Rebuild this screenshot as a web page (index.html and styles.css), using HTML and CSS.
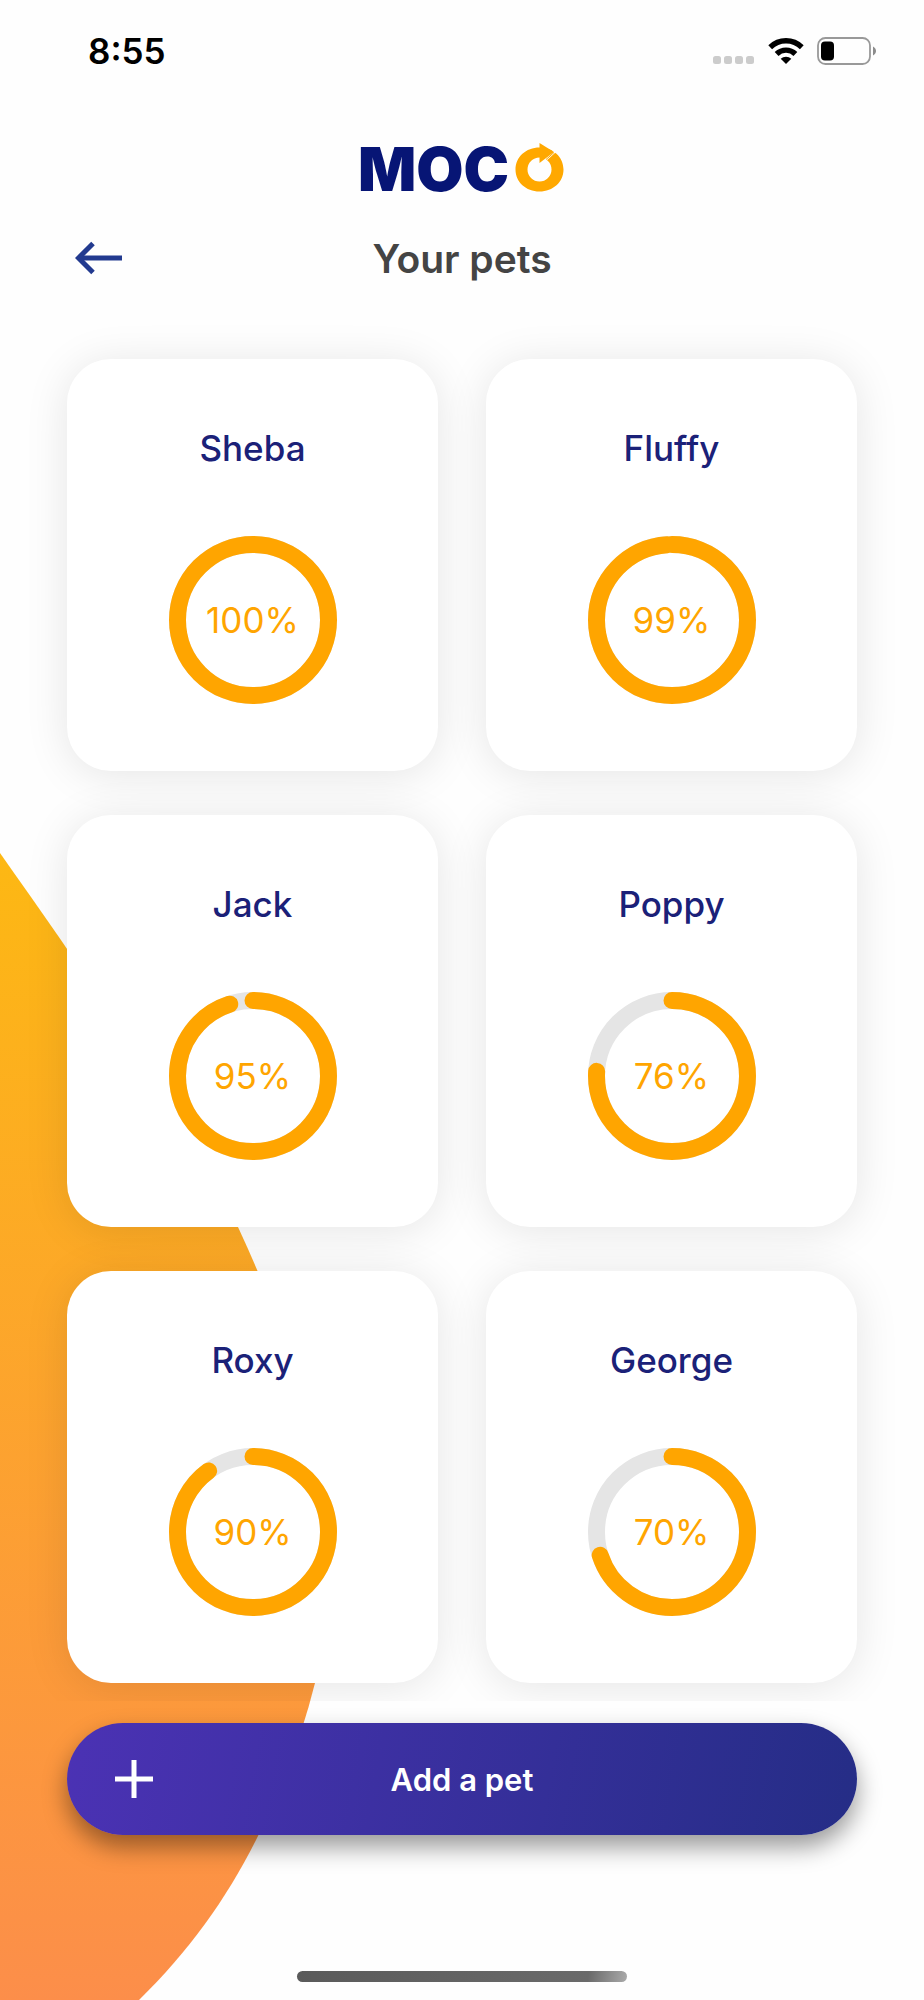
FILE: index.html
```html
<!DOCTYPE html>
<html lang="en">
<head>
    <meta charset="UTF-8">
    <meta name="viewport" content="width=device-width, initial-scale=1.0">
    <title>MOCO - Your pets</title>
    <link rel="stylesheet" href="styles.css">
</head>
<body>
    <svg class="backdrop" viewBox="0 0 340 1160" aria-hidden="true">
        <defs>
            <linearGradient id="backdrop-fill" x1="0" y1="0" x2="0" y2="1">
                <stop offset="0" stop-color="#fdb813"/>
                <stop offset="1" stop-color="#fc8e4a"/>
            </linearGradient>
        </defs>
        <path fill="url(#backdrop-fill)" d="M0 13 C100 155 190 285 238 387 C300 520 350 680 315 843 C302 895 283 945 259 994 C228 1057 190 1110 139 1160 H0 Z"/>
    </svg>

    <div class="status-bar">
        <span class="clock">8:55</span>
        <div class="status-icons">
            <svg width="42" height="26" viewBox="0 0 42 26" fill="#cccccc" aria-hidden="true">
                <rect x="0" y="18" width="8" height="8" rx="2.5"/>
                <rect x="11" y="18" width="8" height="8" rx="2.5"/>
                <rect x="22" y="18" width="8" height="8" rx="2.5"/>
                <rect x="33" y="18" width="8" height="8" rx="2.5"/>
            </svg>
            <svg width="36" height="26" viewBox="0 0 36 26" aria-hidden="true">
                <g fill="none" stroke="#000" stroke-width="5.4">
                    <path d="M2.2 9.2 A22.6 22.6 0 0 1 33.8 9.2"/>
                    <path d="M8.6 16 A13.4 13.4 0 0 1 27.4 16"/>
                </g>
                <path d="M18 26 L12.7 20.8 A7.6 7.6 0 0 1 23.3 20.8 Z"/>
            </svg>
            <svg width="60" height="28" viewBox="0 0 60 28" aria-hidden="true">
                <rect x="1" y="1" width="52" height="26" rx="7.5" fill="none" stroke="#999" stroke-width="1.8"/>
                <rect x="4" y="4.5" width="13" height="19" rx="4"/>
                <path d="M56 9.5 C60 11.5 60 16.5 56 18.5 Z" fill="#8c8c8c"/>
            </svg>
        </div>
    </div>

    <header>
        <svg class="logo" width="203" height="52" viewBox="0 0 203 52" role="img" aria-label="MOCO">
            <text class="logo-text" x="-3" y="49">MOC</text>
            <path fill="#ffa800" fill-rule="evenodd" d="M178.500 5.500 C192 5.500 202.500 15 202.500 27.500 C202.500 40 192 49.500 178.500 49.500 C165 49.500 154.500 40 154.500 27.500 C154.500 15 165 5.500 178.500 5.500 Z M178.500 15.500 A12 12 0 1 0 178.500 39.500 A12 12 0 1 0 178.500 15.500 Z"/>
            <path d="M183 19 L194 9" stroke="#fefefe" stroke-width="3" fill="none"/>
            <path d="M178.500 1 L193 10 L178.500 21 Z" fill="#ffa800"/>
            <path d="M185 17.500 L193 10.500" stroke="#ffa800" stroke-width="1"/>
        </svg>
        <div class="title-row">
            <a class="back-link" href="#" aria-label="Back">
                <svg width="48" height="34" viewBox="0 0 48 34" fill="none" stroke="#223a8f" stroke-width="5">
                    <path d="M47 17 H4"/>
                    <path d="M18 2.500 L3.500 17 L18 31.500"/>
                </svg>
            </a>
            <h1>Your pets</h1>
        </div>
    </header>

    <main>
        <ul class="pet-grid">
            <li class="pet-card">
                <h2>Sheba</h2>
                <div class="ring">
                    <svg viewBox="0 0 168 168" aria-hidden="true">
                        <circle class="ring-track" cx="84" cy="84" r="75.5"/>
                        <circle class="ring-value" cx="84" cy="84" r="75.5" pathLength="100" style="stroke-dasharray: 100 100"/>
                    </svg>
                    <span class="ring-label">100%</span>
                </div>
            </li>
            <li class="pet-card">
                <h2>Fluffy</h2>
                <div class="ring">
                    <svg viewBox="0 0 168 168" aria-hidden="true">
                        <circle class="ring-track" cx="84" cy="84" r="75.5"/>
                        <circle class="ring-value" cx="84" cy="84" r="75.5" pathLength="100" style="stroke-dasharray: 99 100"/>
                    </svg>
                    <span class="ring-label">99%</span>
                </div>
            </li>
            <li class="pet-card">
                <h2>Jack</h2>
                <div class="ring">
                    <svg viewBox="0 0 168 168" aria-hidden="true">
                        <circle class="ring-track" cx="84" cy="84" r="75.5"/>
                        <circle class="ring-value" cx="84" cy="84" r="75.5" pathLength="100" style="stroke-dasharray: 95 100"/>
                    </svg>
                    <span class="ring-label">95%</span>
                </div>
            </li>
            <li class="pet-card">
                <h2>Poppy</h2>
                <div class="ring">
                    <svg viewBox="0 0 168 168" aria-hidden="true">
                        <circle class="ring-track" cx="84" cy="84" r="75.5"/>
                        <circle class="ring-value" cx="84" cy="84" r="75.5" pathLength="100" style="stroke-dasharray: 76 100"/>
                    </svg>
                    <span class="ring-label">76%</span>
                </div>
            </li>
            <li class="pet-card">
                <h2>Roxy</h2>
                <div class="ring">
                    <svg viewBox="0 0 168 168" aria-hidden="true">
                        <circle class="ring-track" cx="84" cy="84" r="75.5"/>
                        <circle class="ring-value" cx="84" cy="84" r="75.5" pathLength="100" style="stroke-dasharray: 90 100"/>
                    </svg>
                    <span class="ring-label">90%</span>
                </div>
            </li>
            <li class="pet-card">
                <h2>George</h2>
                <div class="ring">
                    <svg viewBox="0 0 168 168" aria-hidden="true">
                        <circle class="ring-track" cx="84" cy="84" r="75.5"/>
                        <circle class="ring-value" cx="84" cy="84" r="75.5" pathLength="100" style="stroke-dasharray: 70 100"/>
                    </svg>
                    <span class="ring-label">70%</span>
                </div>
            </li>
        </ul>
    </main>

    <footer>
        <button type="button" class="add-btn">
            <svg width="38" height="38" viewBox="0 0 38 38" stroke="#fff" stroke-width="5" aria-hidden="true">
                <path d="M19 0 V38 M0 19 H38"/>
            </svg>
            <span>Add a pet</span>
        </button>
        <div class="home-indicator"></div>
    </footer>
</body>
</html>
```
FILE: styles.css
```css
:root {
    --navy: #1b2178;
    --logo-navy: #071575;
    --orange: #ffa500;
    --track: #e5e5e5;
    --title: #444444;
    --page-bg: #fefefe;
    --white: #ffffff;
    --gutter: 67px;
}

* {
    box-sizing: border-box;
}

body {
    position: relative;
    display: flex;
    flex-direction: column;
    min-height: 100vh;
    margin: 0;
    background-color: var(--page-bg);
    font-family: Inter, 'Helvetica Neue', Arial, sans-serif;
}

svg {
    display: block;
}

/* Orange shape behind the cards */
.backdrop {
    position: absolute;
    left: 0;
    bottom: 0;
    width: 340px;
    z-index: -1;
}

.status-bar {
    display: flex;
    justify-content: space-between;
    align-items: center;
    height: 102px;
    padding: 0 47px 0 88px;
}

.clock {
    font-size: 35px;
    font-weight: 600;
}

.status-icons {
    display: flex;
    align-items: center;
    gap: 13px;
}

header {
    padding: 40px var(--gutter) 29px;
}

.logo {
    margin: 0 auto;
    overflow: visible;
}

.logo-text {
    fill: var(--logo-navy);
    font-size: 61px;
    font-weight: 900;
}

.title-row {
    display: grid;
    grid-template-columns: 64px 1fr 64px;
    align-items: center;
    height: 64px;
    margin-top: 32px;
}

.back-link {
    padding-left: 8px;
}

h1 {
    margin: 0;
    color: var(--title);
    font-size: 39px;
    font-weight: 600;
    text-align: center;
}

main {
    overflow: hidden;
    padding: 40px var(--gutter) 18px;
}

.pet-grid {
    display: grid;
    grid-template-columns: 1fr 1fr;
    gap: 44px 48px;
    margin: 0;
    padding: 0;
    list-style: none;
}

.pet-card {
    display: flex;
    flex-direction: column;
    align-items: center;
    gap: 65px;
    padding: 67px 24px;
    border-radius: 44px;
    background-color: var(--white);
    box-shadow: 0 4px 44px rgba(0, 0, 0, 0.1);
}

h2 {
    margin: 0;
    color: var(--navy);
    font-size: 35px;
    font-weight: 500;
    line-height: 45px;
}

.ring {
    display: grid;
    place-items: center;
    width: 168px;
    height: 168px;
}

.ring svg,
.ring-label {
    grid-area: 1 / 1;
}

.ring svg {
    width: 100%;
    transform: rotate(-90deg);
}

.ring circle {
    fill: none;
    stroke-width: 17px;
}

.ring-track {
    stroke: var(--track);
}

.ring-value {
    stroke: var(--orange);
    stroke-linecap: round;
}

.ring-label {
    color: var(--orange);
    font-size: 35px;
    font-weight: 400;
}

footer {
    display: flex;
    flex: 1;
    flex-direction: column;
    justify-content: space-between;
    align-items: center;
    padding: 22px var(--gutter) 18px;
}

.add-btn {
    display: grid;
    grid-template-columns: 38px 1fr 38px;
    align-items: center;
    width: 100%;
    height: 112px;
    padding: 0 48px;
    border: none;
    border-radius: 56px;
    background: linear-gradient(100deg, #4b32b4, #252d86);
    box-shadow: 0 12px 24px rgba(0, 0, 0, 0.4);
    color: var(--white);
    font-family: inherit;
    font-size: 31px;
    font-weight: 600;
    cursor: pointer;
}

.home-indicator {
    width: 330px;
    height: 11px;
    border-radius: 6px;
    background: linear-gradient(100deg, #5a5a5a, #6a6a6a 88%, #aaaaaa);
}
```
